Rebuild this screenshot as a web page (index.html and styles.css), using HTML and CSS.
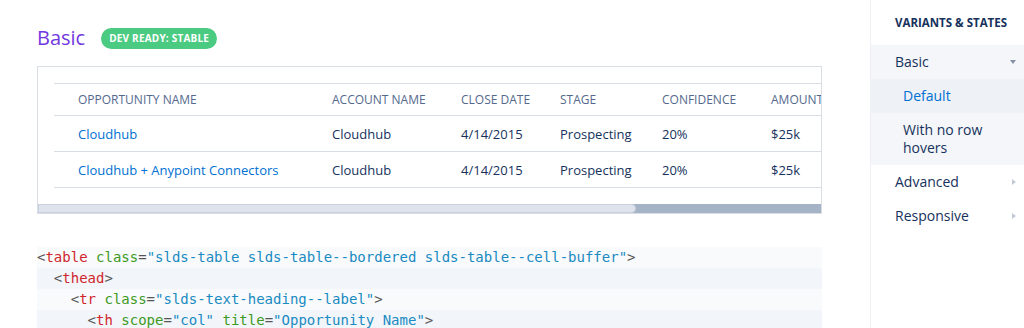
FILE: index.html
```html
<!DOCTYPE html>
<html lang="en">
<head>
  <meta charset="UTF-8">
  <meta name="viewport" content="width=device-width, initial-scale=1.0">
  <title>Data Tables</title>
  <link rel="stylesheet" href="styles.css">
</head>
<body>
  <div class="page">
    <main class="content">
      <!-- Titulo da variante -->
      <div class="example-head">
        <h2>Basic</h2>
        <span class="badge">Dev Ready: Stable</span>
      </div>

      <div class="demo">
        <div class="demo-scroll">
          <table class="data-table">
            <thead>
              <tr>
                <th class="col-name">Opportunity Name</th>
                <th class="col-account">Account Name</th>
                <th class="col-date">Close Date</th>
                <th class="col-stage">Stage</th>
                <th class="col-conf">Confidence</th>
                <th class="col-amount">Amount</th>
              </tr>
            </thead>
            <tbody>
              <tr>
                <td><a href="#">Cloudhub</a></td>
                <td>Cloudhub</td>
                <td>4/14/2015</td>
                <td>Prospecting</td>
                <td>20%</td>
                <td>$25k</td>
              </tr>
              <tr>
                <td><a href="#">Cloudhub + Anypoint Connectors</a></td>
                <td>Cloudhub</td>
                <td>4/14/2015</td>
                <td>Prospecting</td>
                <td>20%</td>
                <td>$25k</td>
              </tr>
            </tbody>
          </table>
        </div>
        <div class="scrollbar"><div class="scrollbar-thumb"></div></div>
      </div>

      <pre class="code"><span class="line"><span class="p">&lt;</span><span class="t">table</span> <span class="a">class</span><span class="p">=</span><span class="s">"slds-table slds-table--bordered slds-table--cell-buffer"</span><span class="p">&gt;</span></span><span class="line">  <span class="p">&lt;</span><span class="t">thead</span><span class="p">&gt;</span></span><span class="line">    <span class="p">&lt;</span><span class="t">tr</span> <span class="a">class</span><span class="p">=</span><span class="s">"slds-text-heading--label"</span><span class="p">&gt;</span></span><span class="line">      <span class="p">&lt;</span><span class="t">th</span> <span class="a">scope</span><span class="p">=</span><span class="s">"col"</span> <span class="a">title</span><span class="p">=</span><span class="s">"Opportunity Name"</span><span class="p">&gt;</span></span></pre>
    </main>

    <!-- Menu lateral -->
    <aside class="sidebar">
      <h3>Variants &amp; States</h3>
      <ul class="nav">
        <li class="nav-group open">
          <div class="nav-item">Basic <span class="caret down"></span></div>
          <ul class="sub-nav">
            <li class="sub-item active">Default</li>
            <li class="sub-item">With no row hovers</li>
          </ul>
        </li>
        <li class="nav-group">
          <div class="nav-item">Advanced <span class="caret"></span></div>
        </li>
        <li class="nav-group">
          <div class="nav-item">Responsive <span class="caret"></span></div>
        </li>
      </ul>
    </aside>
  </div>
</body>
</html>
```

FILE: styles.css
```css
* {
  box-sizing: border-box;
  margin: 0;
  padding: 0;
}

body {
  background-color: #fff;
  color: #16325c;
  font-family: "Open Sans", Arial, sans-serif;
  overflow: hidden;
}

.page {
  display: flex;
  width: 1024px;
  height: 328px;
}

/* Coluna principal */
.content {
  width: 870px;
  padding: 24px 48px 0 37px;
  flex-shrink: 0;
}

.example-head {
  display: flex;
  align-items: center;
  gap: 16px;
  height: 28px;
}

.example-head h2 {
  font-size: 20px;
  font-weight: 400;
  color: #7138e0;
  line-height: 28px;
}

.badge {
  display: inline-block;
  background-color: #4bca81;
  color: #fff;
  font-size: 10px;
  font-weight: 700;
  text-transform: uppercase;
  letter-spacing: 0.2px;
  line-height: 21px;
  padding: 0 8px;
  border-radius: 11px;
}

/* Caixa de demonstracao */
.demo {
  margin-top: 14px;
  border: 1px solid #d8dde6;
  width: 785px;
}

.demo-scroll {
  overflow: hidden;
  padding: 16px 0 16px 16px;
}

.data-table {
  border-collapse: collapse;
  table-layout: fixed;
  width: 809px;
  border-top: 1px solid #d8dde6;
  font-size: 13px;
  white-space: nowrap;
}

.data-table th,
.data-table td {
  text-align: left;
  padding: 0 8px;
  border-bottom: 1px solid #d8dde6;
  overflow: hidden;
}

.data-table th:first-child,
.data-table td:first-child {
  padding-left: 24px;
}

.data-table th {
  height: 32px;
  font-size: 12px;
  font-weight: 400;
  color: #54698d;
  text-transform: uppercase;
}

.data-table td {
  height: 36px;
}

.data-table a {
  color: #0070d2;
  text-decoration: none;
}

.col-name { width: 270px; }
.col-account { width: 129px; }
.col-date { width: 99px; }
.col-stage { width: 102px; }
.col-conf { width: 109px; }
.col-amount { width: 100px; }

.scrollbar {
  height: 9px;
  background-color: #a4b4c6;
}

.scrollbar-thumb {
  width: 598px;
  height: 9px;
  background-color: #dfe4ec;
  border: 1px solid #c9d2de;
  border-radius: 0 5px 5px 0;
}

/* Bloco de codigo */
.code {
  margin-top: 33px;
  width: 785px;
  font-family: "DejaVu Sans Mono", Menlo, monospace;
  font-size: 14px;
  line-height: 21px;
  color: #555;
}

.code .line {
  display: block;
  height: 21px;
  background-color: #f9fafb;
}

.code .line:nth-child(even) {
  background-color: #f2f6fa;
}

.code .t { color: #d0262e; }
.code .a { color: #3d9a1f; }
.code .s { color: #1a8ac2; }
.code .p { color: #555; }

/* Menu lateral */
.sidebar {
  width: 154px;
  border-left: 1px solid #eef0f3;
  padding-top: 15px;
}

.sidebar h3 {
  font-size: 11.5px;
  font-weight: 700;
  text-transform: uppercase;
  color: #16325c;
  padding-left: 24px;
  line-height: 16px;
  margin-bottom: 14px;
}

.nav {
  list-style: none;
}

.nav-group.open {
  background-color: #f4f6f9;
}

.nav-item {
  display: flex;
  justify-content: space-between;
  align-items: center;
  font-size: 14px;
  line-height: 20px;
  padding: 7px 8px 7px 24px;
}

.sub-nav {
  list-style: none;
}

.sub-item {
  font-size: 14px;
  line-height: 18px;
  padding: 8px 16px 8px 32px;
}

.sub-item.active {
  background-color: #eef1f6;
  color: #0070d2;
}

.caret {
  width: 0;
  height: 0;
  border-top: 3px solid transparent;
  border-bottom: 3px solid transparent;
  border-left: 4px solid #c2cad6;
}

.caret.down {
  border-left: 3px solid transparent;
  border-right: 3px solid transparent;
  border-top: 4px solid #8592a6;
  border-bottom: 0;
}
```
